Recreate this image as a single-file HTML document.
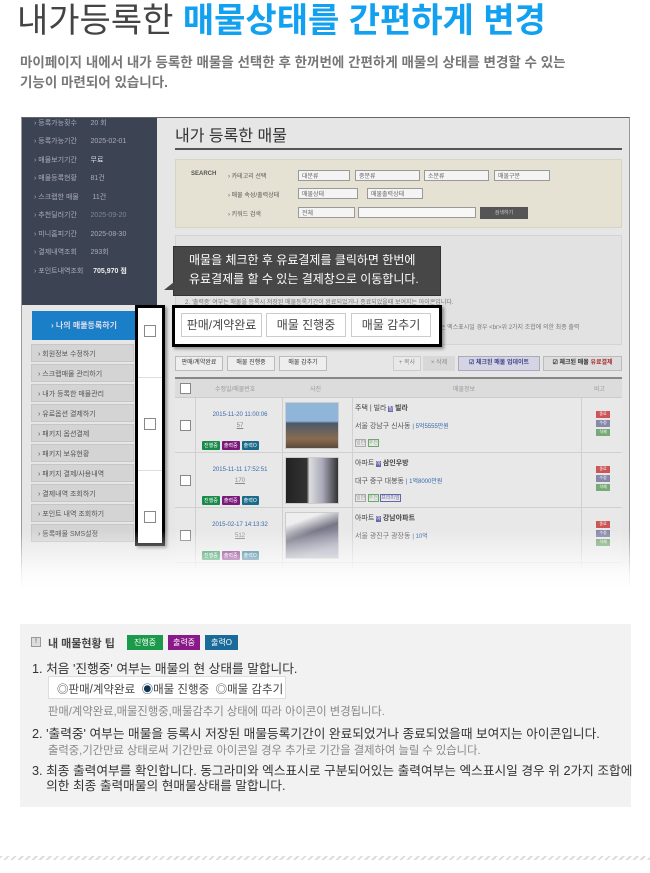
<!DOCTYPE html>
<html><head><meta charset="utf-8">
<style>
*{margin:0;padding:0;box-sizing:border-box}
body{width:650px;height:873px;background:#fff;font-family:"Liberation Sans","Noto Sans CJK KR",sans-serif;position:relative;overflow:hidden;color:#333}
.a{position:absolute}
.t{white-space:nowrap}
.side div{position:absolute;left:0;width:130px;font-size:7px;color:#aab;white-space:nowrap}
.menu{position:absolute;left:31px;width:103px;height:18px;background:#d4d4d4;border:1px solid #c6c6c6;font-size:7px;color:#555;padding:4px 0 0 6px;white-space:nowrap}
.sel{position:absolute;height:11px;background:#f4f4f4;border:1px solid #999;font-size:6px;color:#666;padding-left:3px}
.btn{position:absolute;height:24px;border:1px solid #ccc;background:#fff;font-size:12px;color:#444;text-align:center;line-height:22px}
.cb{position:absolute;width:11px;height:11px;border:1px solid #888;background:#fff}
.tag{display:inline-block;font-size:5px;color:#fff;padding:1px 2px;margin-right:2px;border-radius:1px}
.row{position:absolute;left:175px;width:447px;height:55px;border-bottom:1px solid #d0d0d0}
.st{position:absolute;left:596px;width:14px;height:7px;font-size:4px;color:#fff;text-align:center}
</style></head><body>
<div class="a t" style="left:17px;top:-1px;font-size:34px;line-height:44px;color:#444;letter-spacing:0">내가등록한 <b style="color:#12a0f0">매물상태를 간편하게 변경</b></div>
<div class="a t" style="left:20px;top:53px;font-size:13.5px;line-height:20px;color:#777;font-weight:bold">마이페이지 내에서 내가 등록한 매물을 선택한 후 한꺼번에 간편하게 매물의 상태를 변경할 수 있는<br>기능이 마련되어 있습니다.</div>

<div class="a" style="left:21px;top:117px;width:609px;height:475px;background:#e6e6e6;border-top:1px solid #666;border-left:1px solid #999;border-right:1px solid #999"></div>
<div class="a side" style="left:22px;top:118px;width:135px;height:187px;background:#3c4453">
<div style="top:0;left:12px">› 등록가능횟수 &nbsp; &nbsp; &nbsp; 20 회</div>
<div style="top:18px;left:12px">› 등록가능기간 &nbsp; &nbsp; &nbsp; 2025-02-01</div>
<div style="top:37px;left:12px">› 매물보기기간 &nbsp; &nbsp; &nbsp; <span style="color:#dde">무료</span></div>
<div style="top:55px;left:12px">› 매물등록현황 &nbsp; &nbsp; &nbsp; 81건</div>
<div style="top:74px;left:12px">› 스크랩한 매물 &nbsp; &nbsp; &nbsp; 11건</div>
<div style="top:92px;left:12px">› 추천딜러기간 &nbsp; &nbsp; &nbsp; <span style="color:#789">2025-09-20</span></div>
<div style="top:111px;left:12px">› 미니홈피기간 &nbsp; &nbsp; &nbsp; 2025-08-30</div>
<div style="top:129px;left:12px">› 결제내역조회 &nbsp; &nbsp; &nbsp; 293회</div>
<div style="top:148px;left:12px">› 포인트내역조회 &nbsp; &nbsp; <b style="color:#eee">705,970 점</b></div>
</div>
<div class="a t" style="left:32px;top:311px;width:104px;height:29px;background:#1b7fc8;color:#dde;font-size:8px;font-weight:bold;text-align:center;line-height:29px">› 나의 매물등록하기</div>
<div class="menu" style="top:344px">› 회원정보 수정하기</div>
<div class="menu" style="top:364px">› 스크랩매물 관리하기</div>
<div class="menu" style="top:384px">› 내가 등록한 매물관리</div>
<div class="menu" style="top:404px">› 유료옵션 결제하기</div>
<div class="menu" style="top:424px">› 패키지 옵션결제</div>
<div class="menu" style="top:444px">› 패키지 보유현황</div>
<div class="menu" style="top:464px">› 패키지 결제/사용내역</div>
<div class="menu" style="top:484px">› 결제내역 조회하기</div>
<div class="menu" style="top:504px">› 포인트 내역 조회하기</div>
<div class="menu" style="top:524px">› 등록매물 SMS설정</div>

<div class="a t" style="left:175px;top:122px;font-size:16px;color:#333">내가 등록한 매물</div>
<div class="a" style="left:175px;top:148px;width:447px;height:2px;background:#555"></div>
<div class="a" style="left:175px;top:159px;width:447px;height:69px;background:#e6e2d3;border:1px solid #d8d4c4"></div>
<div class="a t" style="left:191px;top:171px;font-size:6px;font-weight:bold;color:#555">SEARCH</div>
<div class="a t" style="left:228px;top:171px;font-size:6px;color:#555">› 카테고리 선택</div>
<div class="a t" style="left:228px;top:190px;font-size:6px;color:#555">› 매물 속성/출력상태</div>
<div class="a t" style="left:228px;top:209px;font-size:6px;color:#555">› 키워드 검색</div>
<div class="sel" style="left:298px;top:170px;width:52px">대분류</div>
<div class="sel" style="left:355px;top:170px;width:65px">중분류</div>
<div class="sel" style="left:424px;top:170px;width:65px">소분류</div>
<div class="sel" style="left:494px;top:170px;width:56px">매물구분</div>
<div class="sel" style="left:298px;top:188px;width:60px">매물상태</div>
<div class="sel" style="left:367px;top:188px;width:56px">매물출력상태</div>
<div class="sel" style="left:298px;top:207px;width:57px">전체</div>
<div class="sel" style="left:358px;top:207px;width:118px;background:#f7f7f7"></div>
<div class="a t" style="left:480px;top:207px;width:48px;height:12px;background:#555;color:#ccc;font-size:5px;text-align:center;line-height:12px">검색하기</div>
<div class="a" style="left:175px;top:235px;width:447px;height:110px;background:#e2e2e2;border:1px solid #d4d4d4"></div>
<div class="a t" style="left:185px;top:297px;font-size:6px;color:#777">2. '출력중' 여부는 매물을 등록시 저장된 매물등록기간이 완료되었거나 종료되었을때 보여지는 아이콘입니다.</div>
<div class="a t" style="left:440px;top:322px;font-size:6px;color:#777">는 엑스표시일 경우 &lt;br&gt;위 2가지 조합에 의한 최종 출력</div>

<div class="a" style="left:173px;top:246px;width:268px;height:50px;background:#474747;border:1px solid #333"></div>
<div class="a" style="left:164px;top:282px;width:0;height:0;border-top:8px solid transparent;border-right:10px solid #474747"></div>
<div class="a t" style="left:189px;top:251px;font-size:12px;line-height:19px;color:#fff">매물을 체크한 후 유료결제를 클릭하면 한번에<br>유료결제를 할 수 있는 결제창으로 이동합니다.</div>

<div class="a" style="left:172px;top:305px;width:270px;height:42px;background:#fff;border:3px solid #000;box-shadow:2px 2px 3px rgba(0,0,0,.4)"></div>
<div class="btn" style="left:181px;top:313px;width:81px">판매/계약완료</div>
<div class="btn" style="left:266px;top:313px;width:80px">매물 진행중</div>
<div class="btn" style="left:351px;top:313px;width:80px">매물 감추기</div>

<div class="a" style="left:135px;top:305px;width:30px;height:241px;background:#fff;border:3px solid #000;box-shadow:2px 2px 3px rgba(0,0,0,.4)"></div>
<div class="a" style="left:138px;top:377px;width:24px;height:1px;background:#ddd"></div>
<div class="a" style="left:138px;top:470px;width:24px;height:1px;background:#ddd"></div>
<div class="cb" style="left:144px;top:325px;width:12px;height:12px"></div>
<div class="cb" style="left:144px;top:418px;width:12px;height:12px"></div>
<div class="cb" style="left:144px;top:511px;width:12px;height:12px"></div>

<div class="a t" style="left:175px;top:356px;width:48px;height:15px;border:1px solid #bbb;background:#eee;font-size:6px;text-align:center;line-height:13px">판매/계약완료</div>
<div class="a t" style="left:227px;top:356px;width:48px;height:15px;border:1px solid #bbb;background:#eee;font-size:6px;text-align:center;line-height:13px">매물 진행중</div>
<div class="a t" style="left:279px;top:356px;width:48px;height:15px;border:1px solid #bbb;background:#eee;font-size:6px;text-align:center;line-height:13px">매물 감추기</div>
<div class="a t" style="left:393px;top:356px;width:28px;height:15px;border:1px solid #ccc;background:#e8e8e8;font-size:6px;color:#888;text-align:center;line-height:13px">+ 복사</div>
<div class="a t" style="left:423px;top:356px;width:32px;height:15px;background:#d8d8d8;font-size:6px;color:#888;text-align:center;line-height:15px">× 삭제</div>
<div class="a t" style="left:458px;top:356px;width:82px;height:15px;border:1px solid #aab;background:#d4d4e4;font-size:6px;color:#448;font-weight:bold;text-align:center;line-height:13px">☑ 체크된 매물 업데이트</div>
<div class="a t" style="left:543px;top:356px;width:79px;height:15px;border:1px solid #bbb;background:#ddd;font-size:6px;color:#333;font-weight:bold;text-align:center;line-height:13px">☑ 체크된 매물 <span style="color:#a33">유료결제</span></div>

<div class="a" style="left:175px;top:377px;width:447px;height:2px;background:#888"></div>
<div class="a" style="left:175px;top:379px;width:447px;height:19px;background:#dcdcdc;border-bottom:1px solid #ccc"></div>
<div class="cb" style="left:180px;top:383px"></div>
<div class="a t" style="left:215px;top:384px;font-size:6px;color:#999">수정일/매물번호</div>
<div class="a t" style="left:310px;top:384px;font-size:6px;color:#999">사진</div>
<div class="a t" style="left:453px;top:384px;font-size:6px;color:#999">매물정보</div>
<div class="a t" style="left:594px;top:384px;font-size:6px;color:#999">비고</div>

<div class="row" style="top:398px;background:#e8e8e8"></div>
<div class="row" style="top:453px;background:#e8e8e8"></div>
<div class="row" style="top:508px;background:#e8e8e8"></div>
<div class="a" style="left:195px;top:398px;width:1px;height:170px;background:#d0d0d0"></div>
<div class="a" style="left:282px;top:398px;width:1px;height:170px;background:#d0d0d0"></div>
<div class="a" style="left:352px;top:398px;width:1px;height:170px;background:#d0d0d0"></div>
<div class="a" style="left:581px;top:398px;width:1px;height:170px;background:#d0d0d0"></div>

<div class="cb" style="left:180px;top:420px"></div>
<div class="cb" style="left:180px;top:475px"></div>
<div class="cb" style="left:180px;top:530px"></div>
<div class="a t" style="left:205px;top:410px;font-size:6px;color:#3a6aa8;text-align:center;width:70px;line-height:11px">2015-11-20 11:00:06<br><u style="color:#888">57</u></div>
<div class="a t" style="left:205px;top:465px;font-size:6px;color:#3a6aa8;text-align:center;width:70px;line-height:11px">2015-11-11 17:52:51<br><u style="color:#888">170</u></div>
<div class="a t" style="left:205px;top:520px;font-size:6px;color:#3a6aa8;text-align:center;width:70px;line-height:11px">2015-02-17 14:13:32<br><u style="color:#888">512</u></div>
<div class="a t" style="left:202px;top:434px"><span class="tag" style="background:#1a8a4a">진행중</span><span class="tag" style="background:#7a1a7a">출력중</span><span class="tag" style="background:#1a6a8a">출력O</span></div>
<div class="a t" style="left:202px;top:489px"><span class="tag" style="background:#1a8a4a">진행중</span><span class="tag" style="background:#7a1a7a">출력중</span><span class="tag" style="background:#1a6a8a">출력O</span></div>
<div class="a t" style="left:202px;top:544px"><span class="tag" style="background:#1a8a4a">진행중</span><span class="tag" style="background:#7a1a7a">출력중</span><span class="tag" style="background:#1a6a8a">출력O</span></div>

<div class="a" style="left:285px;top:402px;width:54px;height:47px;border:1px solid #ccc;background:linear-gradient(180deg,#8fb6d8 0%,#8fb6d8 40%,#4a5a6a 45%,#8a6a50 80%,#5a4a3a 100%)"></div>
<div class="a" style="left:285px;top:457px;width:54px;height:47px;border:1px solid #ccc;background:linear-gradient(90deg,#222 0%,#333 40%,#ddd 45%,#aab 70%,#333 100%)"></div>
<div class="a" style="left:285px;top:512px;width:54px;height:47px;border:1px solid #ccc;background:linear-gradient(160deg,#eee 20%,#778 45%,#aab 80%)"></div>

<div class="a t" style="left:355px;top:403px;font-size:7px;color:#444">주택 | 빌라 <span style="background:#66a;color:#fff;font-size:5px">빌</span> <b>빌라</b></div>
<div class="a t" style="left:355px;top:421px;font-size:7px;color:#555">서울 강남구 신사동 <span style="color:#36a;font-size:6px">| 5억5555만원</span></div>
<div class="a t" style="left:355px;top:439px;font-size:5px;color:#9a9"><span style="border:1px solid #aaa;color:#999">일반</span> <span style="border:1px solid #6a6">추천</span></div>
<div class="a t" style="left:355px;top:458px;font-size:7px;color:#444">아파트 <span style="background:#66a;color:#fff;font-size:5px">아</span> <b>삼인우방</b></div>
<div class="a t" style="left:355px;top:476px;font-size:7px;color:#555">대구 중구 대봉동 <span style="color:#36a;font-size:6px">| 1억8000만원</span></div>
<div class="a t" style="left:355px;top:494px;font-size:5px;color:#9a9"><span style="border:1px solid #aaa;color:#999">일반</span> <span style="border:1px solid #6a6">추천</span> <span style="border:1px solid #66a;color:#66a">프리미엄</span></div>
<div class="a t" style="left:355px;top:513px;font-size:7px;color:#444">아파트 <span style="background:#66a;color:#fff;font-size:5px">아</span> <b>강남아파트</b></div>
<div class="a t" style="left:355px;top:531px;font-size:7px;color:#666">서울 광진구 광장동 <span style="color:#36a;font-size:6px">| 10억</span></div>

<div class="st" style="top:411px;background:#c55">종료</div><div class="st" style="top:420px;background:#88a">수정</div><div class="st" style="top:429px;background:#7a7">삭제</div>
<div class="st" style="top:466px;background:#c55">종료</div><div class="st" style="top:475px;background:#88a">수정</div><div class="st" style="top:484px;background:#7a7">삭제</div>
<div class="st" style="top:521px;background:#c55">종료</div><div class="st" style="top:530px;background:#88a">수정</div><div class="st" style="top:539px;background:#7a7">삭제</div>

<div class="a" style="left:18px;top:530px;width:616px;height:70px;background:linear-gradient(180deg,rgba(255,255,255,0) 0%,rgba(255,255,255,.85) 60%,#fff 85%)"></div>

<div class="a" style="left:20px;top:624px;width:611px;height:183px;background:#f2f2f2"></div>
<div class="a" style="left:31px;top:637px;width:10px;height:10px;border:1px solid #999;background:#ddd;font-size:7px;text-align:center;line-height:8px;color:#555">!</div>
<div class="a t" style="left:48px;top:635px;font-size:11px;font-weight:bold;color:#444">내 매물현황 팁</div>
<div class="a t" style="left:127px;top:635px;height:15px;width:36px;background:#1a9a4a;color:#fff;font-size:8px;text-align:center;line-height:15px">진행중</div>
<div class="a t" style="left:168px;top:635px;height:15px;width:32px;background:#8a1a8a;color:#fff;font-size:8px;text-align:center;line-height:15px">출력중</div>
<div class="a t" style="left:205px;top:635px;height:15px;width:33px;background:#1a6a9a;color:#fff;font-size:8px;text-align:center;line-height:15px">출력O</div>
<div class="a t" style="left:32px;top:658px;font-size:12.7px;color:#333">1. 처음 '진행중' 여부는 매물의 현 상태를 말합니다.</div>
<div class="a t" style="left:48px;top:676px;width:238px;height:23px;background:#fff;border:1px solid #ddd;font-size:11.5px;color:#444;padding:4px 0 0 8px">◎판매/계약완료 &nbsp;<span style="color:#135">◉</span>매물 진행중 &nbsp;◎매물 감추기</div>
<div class="a t" style="left:48px;top:703px;font-size:11.3px;color:#888">판매/계약완료,매물진행중,매물감추기 상태에 따라 아이콘이 변경됩니다.</div>
<div class="a t" style="left:32px;top:723px;font-size:12.7px;color:#333">2. '출력중' 여부는 매물을 등록시 저장된 매물등록기간이 완료되었거나 종료되었을때 보여지는 아이콘입니다.</div>
<div class="a t" style="left:48px;top:742px;font-size:11.3px;color:#888">출력중,기간만료 상태로써 기간만료 아이콘일 경우 추가로 기간을 결제하여 늘릴 수 있습니다.</div>
<div class="a t" style="left:32px;top:764px;font-size:12.7px;line-height:15px;color:#333">3. 최종 출력여부를 확인합니다. 동그라미와 엑스표시로 구분되어있는 출력여부는 엑스표시일 경우 위 2가지 조합에<br>&nbsp;&nbsp;&nbsp; 의한 최종 출력매물의 현매물상태를 말합니다.</div>

<div class="a" style="left:0;top:856px;width:650px;height:4px;background:repeating-linear-gradient(135deg,#ddd 0 2px,#fff 2px 5px)"></div>
</body></html>
